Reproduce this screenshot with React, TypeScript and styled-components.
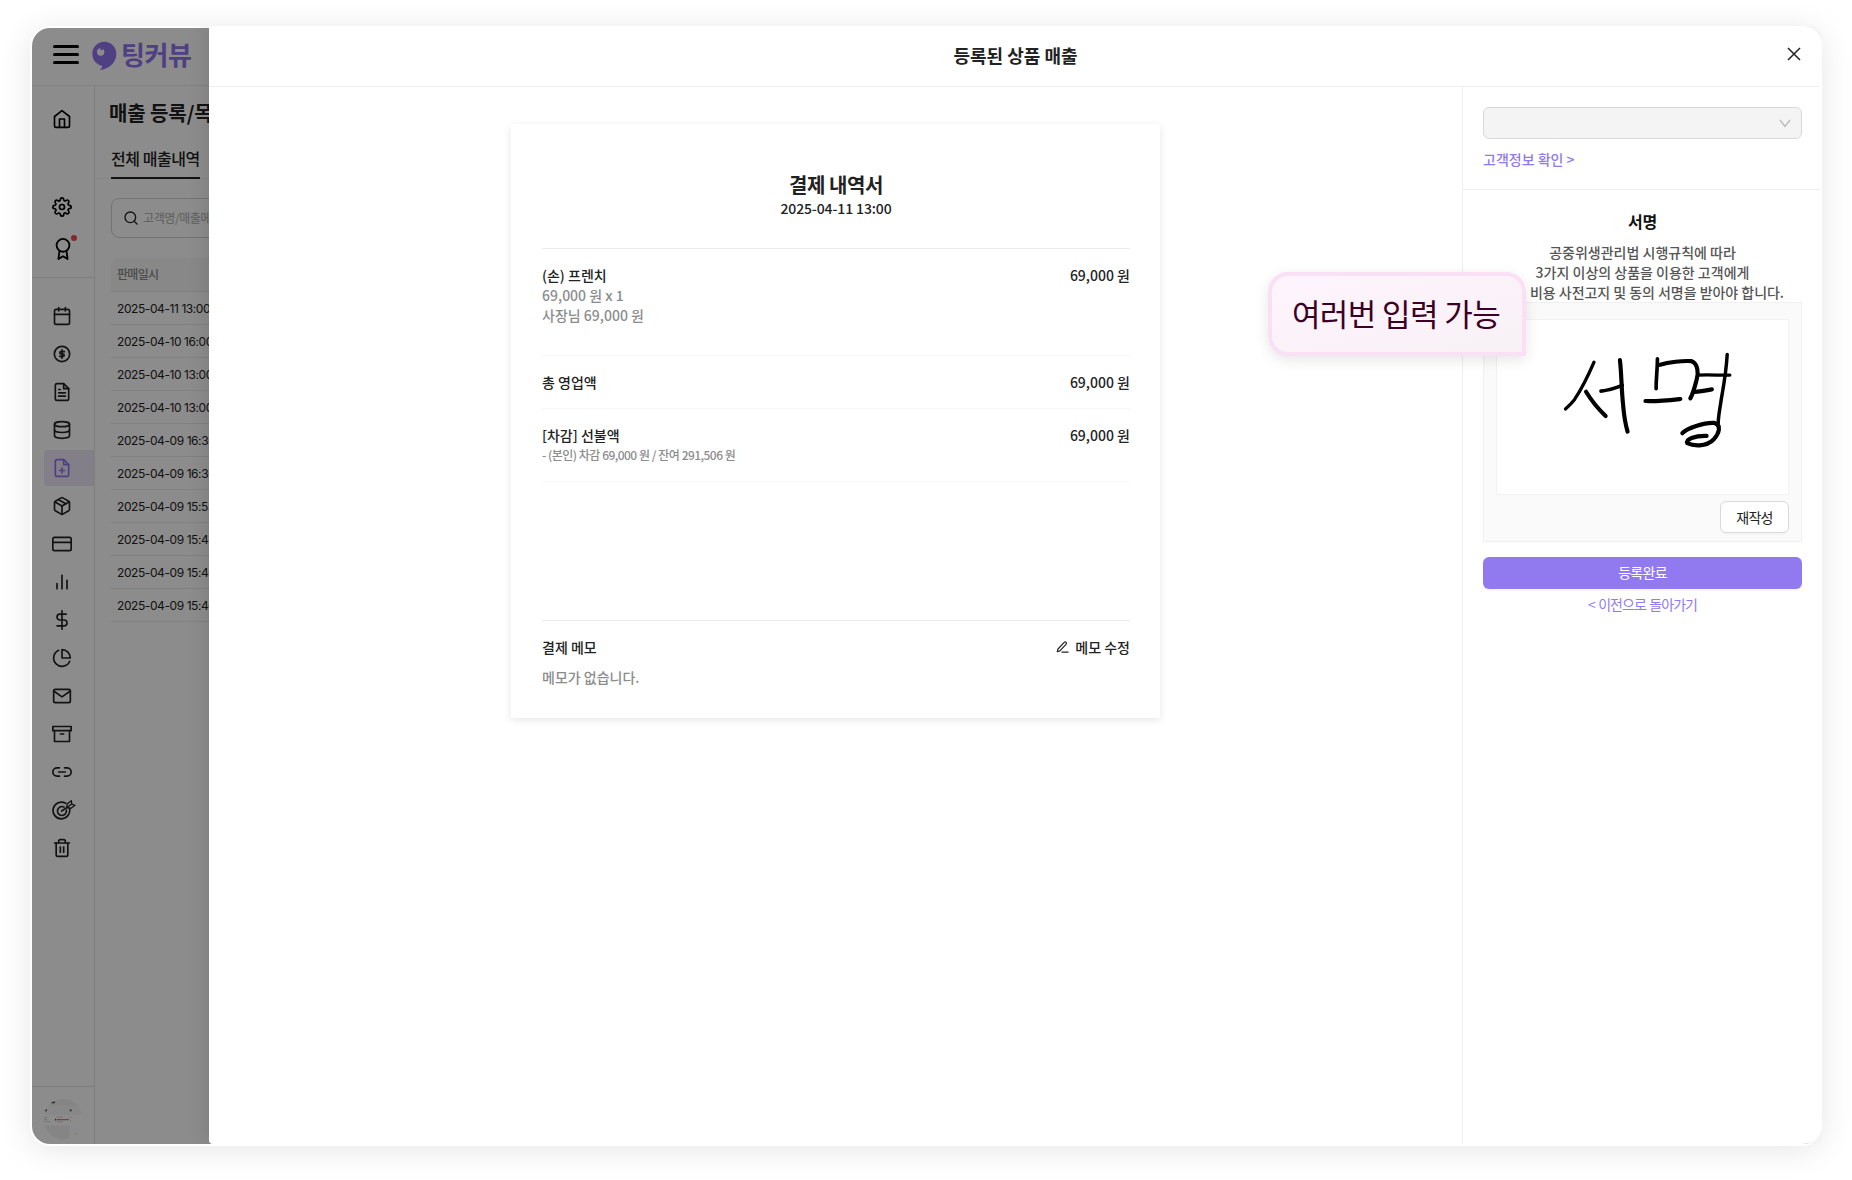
import { ReactNode } from "react";
import styled, { createGlobalStyle, css } from "styled-components";
import {
  FiArchive,
  FiAward,
  FiBarChart2,
  FiCalendar,
  FiCreditCard,
  FiDatabase,
  FiDollarSign,
  FiFilePlus,
  FiFileText,
  FiHome,
  FiLink2,
  FiMail,
  FiPackage,
  FiPieChart,
  FiSearch,
  FiSettings,
  FiTrash2,
} from "react-icons/fi";

interface MenuItem {
  name: string;
  icon: ReactNode;
  isActive?: boolean;
}

const CircleDollarIcon = () => (
  <svg width="20" height="20" viewBox="0 0 24 24" fill="none" stroke="currentColor" strokeWidth="2" strokeLinecap="round" strokeLinejoin="round">
    <circle cx="12" cy="12" r="9.2" />
    <path d="M14.8 9.2h-4a1.4 1.4 0 0 0 0 2.8h2.4a1.4 1.4 0 0 1 0 2.8h-4M12 7v10" />
  </svg>
);

const TargetIcon = () => (
  <svg width="24" height="22" viewBox="0 0 72 66" fill="none" stroke="currentColor" strokeWidth="5" strokeLinecap="round" strokeLinejoin="round">
    <path d="M41 13A25 25 0 1 0 52 27" />
    <path d="M36 24A13.5 13.5 0 1 0 43 33" />
    <path d="M29 36L44 26" />
    <path d="M44 26L46 14L58 5L59 15L69 19L57 28Z" strokeWidth="4" />
    <path d="M44 26L59 15" strokeWidth="4" />
  </svg>
);

const menuItems: MenuItem[] = [
  { name: "calendar", icon: <FiCalendar /> },
  { name: "price", icon: <CircleDollarIcon /> },
  { name: "document", icon: <FiFileText /> },
  { name: "database", icon: <FiDatabase /> },
  { name: "sales", icon: <FiFilePlus />, isActive: true },
  { name: "product", icon: <FiPackage /> },
  { name: "card", icon: <FiCreditCard /> },
  { name: "chart", icon: <FiBarChart2 /> },
  { name: "dollar", icon: <FiDollarSign /> },
  { name: "pie", icon: <FiPieChart /> },
  { name: "mail", icon: <FiMail /> },
  { name: "archive", icon: <FiArchive /> },
  { name: "link", icon: <FiLink2 /> },
  { name: "target", icon: <TargetIcon /> },
  { name: "trash", icon: <FiTrash2 /> },
];

const saleDates: string[] = [
  "2025-04-11 13:00",
  "2025-04-10 16:00",
  "2025-04-10 13:00",
  "2025-04-10 13:00",
  "2025-04-09 16:30",
  "2025-04-09 16:30",
  "2025-04-09 15:53",
  "2025-04-09 15:48",
  "2025-04-09 15:46",
  "2025-04-09 15:46",
];

const Logo = () => (
  <LogoContainer>
    <svg width="25" height="30" viewBox="0 0 75 90" fill="#9173ee">
      <path d="M37 2C57 2 73 18 73 38C73 64 52 84 23 87C29 82 31 78 30 74C13 71 1 56 1 38C1 18 17 2 37 2Z" />
      <circle cx="26" cy="33" r="11" fill="#fff" />
      <circle cx="29" cy="24" r="4" />
    </svg>
    <span>팅커뷰</span>
  </LogoContainer>
);

const Avatar = () => (
  <svg width="40" height="42" viewBox="0 0 120 126">
    <defs>
      <clipPath id="avatar-clip">
        <ellipse cx="60" cy="63" rx="59" ry="61" />
      </clipPath>
    </defs>
    <g clipPath="url(#avatar-clip)">
      <rect width="120" height="126" fill="#f3f3f3" />
      <rect y="24" width="120" height="26" fill="#f8f8f8" />
      <rect y="50" width="120" height="32" fill="#fff" />
      <rect x="80" y="50" width="40" height="76" fill="#fff" />
      <path d="M24 13h12M4 37h8M80 37h6M36 65h4" stroke="#555" strokeWidth="5" />
      <path d="M42 65h36" stroke="#d08878" strokeWidth="4" />
      <path d="M42 57h16M42 71h18M4 59h10M4 65h8M4 71h18M96 106h6" stroke="#bbb" strokeWidth="2" />
      <path d="M83 56v20" stroke="#cca" strokeWidth="3" strokeDasharray="4 8" />
    </g>
  </svg>
);

const Signature = () => (
  <svg width="292" height="174" viewBox="109 267 877 524" fill="none" stroke="#000" strokeWidth="12.5" strokeLinecap="round" strokeLinejoin="round">
    <path d="M403 397C388 432 368 474 344 510C336 520 326 530 317 538" strokeWidth="10" />
    <path d="M379 486C390 504 418 540 438 559" />
    <path d="M424 484C447 482 468 475 488 467" strokeWidth="11" />
    <path d="M481 391C486 430 485 475 491 530C494 565 498 585 504 606" />
    <path d="M594 387C594 420 590 440 590 477" strokeWidth="11" />
    <path d="M602 405C627 397 670 392 697 394C715 400 719 430 712 450C706 472 702 490 693 506" />
    <path d="M558 514C590 516 635 511 663 508" />
    <path d="M716 436C750 434 785 437 812 436" strokeWidth="10" />
    <path d="M705 487C722 485 740 482 758 479" />
    <path d="M804 374C801 430 792 475 786 510C781 545 777 560 777 582" strokeWidth="10.5" />
    <path d="M669 611C682 596 735 578 766 580C788 588 779 612 764 629C740 654 700 649 684 641C678 630 705 618 742 619" />
  </svg>
);

export default function App() {
  return (
    <>
      <GlobalStyle />
      <Frame>
        <Shell>
          <TopBar>
            <Hamburger>
              <span />
              <span />
              <span />
            </Hamburger>
            <Logo />
          </TopBar>
          <ShellBody>
            <SideBar>
              <TopMenu>
                <FiHome />
                <FiSettings />
                <AwardItem>
                  <FiAward />
                </AwardItem>
              </TopMenu>
              <Menu>
                {menuItems.map(({ name, icon, isActive }) => (
                  <MenuButton key={name} $isActive={isActive}>
                    {icon}
                  </MenuButton>
                ))}
              </Menu>
              <Profile>
                <Avatar />
              </Profile>
            </SideBar>
            <SalesPage>
              <h1>매출 등록/목록</h1>
              <Tabs>
                <span>전체 매출내역</span>
              </Tabs>
              <SearchBox>
                <FiSearch />
                고객명/매출메모
              </SearchBox>
              <Table>
                <TableHead>판매일시</TableHead>
                {saleDates.map((date, i) => (
                  <TableRow key={i}>{date}</TableRow>
                ))}
              </Table>
            </SalesPage>
          </ShellBody>
          <Mask />
        </Shell>

        <Drawer>
          <DrawerHeader>
            <h2>등록된 상품 매출</h2>
            <CloseButton>
              <svg width="14" height="14" viewBox="0 0 14 14" stroke="#222" strokeWidth="1.5">
                <path d="M1 1L13 13M13 1L1 13" />
              </svg>
            </CloseButton>
          </DrawerHeader>
          <DrawerBody>
            <ReceiptArea>
              <Receipt>
                <ReceiptHeader>
                  <h3>결제 내역서</h3>
                  <p>2025-04-11 13:00</p>
                </ReceiptHeader>
                <ReceiptRow $height={107}>
                  <div>
                    <p>(손) 프렌치</p>
                    <Muted>69,000 원 x 1</Muted>
                    <Muted>사장님 69,000 원</Muted>
                  </div>
                  <p>69,000 원</p>
                </ReceiptRow>
                <ReceiptRow $height={53}>
                  <p>총 영업액</p>
                  <p>69,000 원</p>
                </ReceiptRow>
                <ReceiptRow $height={73}>
                  <div>
                    <p>[차감] 선불액</p>
                    <Muted $isSmall>- (본인) 차감 69,000 원 / 잔여 291,506 원</Muted>
                  </div>
                  <p>69,000 원</p>
                </ReceiptRow>
                <Memo>
                  <MemoHeader>
                    <p>결제 메모</p>
                    <EditButton>
                      <svg width="13" height="13" viewBox="0 0 13 13" fill="none" stroke="#222" strokeWidth="1.2" strokeLinejoin="round">
                        <path d="M1.3 10.7L2 8L8.2 1.4Q9.2 .6 10 1.4T10 3.3L3.9 9.9ZM5.5 11.2H12.5" />
                      </svg>
                      메모 수정
                    </EditButton>
                  </MemoHeader>
                  <Muted>메모가 없습니다.</Muted>
                </Memo>
              </Receipt>
            </ReceiptArea>

            <SidePanel>
              <Customer>
                <Select>
                  <svg width="12" height="9" viewBox="0 0 12 9" fill="none" stroke="#b8b8b8" strokeWidth="1.3">
                    <path d="M1 1L6 7.5L11 1" />
                  </svg>
                </Select>
                <a>고객정보 확인 &gt;</a>
              </Customer>
              <SignSection>
                <h4>서명</h4>
                <p>공중위생관리법 시행규칙에 따라</p>
                <p>3가지 이상의 상품을 이용한 고객에게</p>
                <LastLine>비용 사전고지 및 동의 서명을 받아야 합니다.</LastLine>
                <SignBox>
                  <SignCanvas>
                    <Signature />
                  </SignCanvas>
                  <RewriteButton>재작성</RewriteButton>
                </SignBox>
                <SubmitButton>등록완료</SubmitButton>
                <BackLink>&lt; 이전으로 돌아가기</BackLink>
              </SignSection>
            </SidePanel>
          </DrawerBody>
        </Drawer>
        <Callout>여러번 입력 가능</Callout>
      </Frame>
    </>
  );
}

const GlobalStyle = createGlobalStyle`
  * {
    box-sizing: border-box;
  }

  body {
    margin: 0;
    background: #fff;
    color: #222;
    font-family: "Noto Sans CJK KR", sans-serif;
    font-size: 14px;
    font-weight: 500;
    line-height: 20px;
  }

  h1, h2, h3, h4, p {
    margin: 0;
  }

  button {
    font-family: inherit;
    padding: 0;
  }

  svg {
    display: block;
    flex-shrink: 0;
  }
`;

const Frame = styled.div`
  position: relative;
  width: 1792px;
  height: 1120px;
  margin: 26px 30px 34px;
  padding: 2px;
  border-radius: 20px;
  background: #fff;
  box-shadow: 0 4px 32px rgba(0, 0, 0, 0.1);
`;

const Shell = styled.div`
  position: relative;
  display: flex;
  flex-direction: column;
  height: 1116px;
  border-radius: 18px;
  overflow: hidden;
  background: #fff;
`;

const Mask = styled.div`
  position: absolute;
  inset: 0;
  background: rgba(0, 0, 0, 0.45);
`;

const TopBar = styled.header`
  display: flex;
  align-items: center;
  height: 58px;
  padding-left: 21px;
  border-bottom: 1px solid #ededed;
`;

const Hamburger = styled.div`
  display: flex;
  flex-direction: column;
  gap: 5px;
  width: 26px;
  margin-right: 13px;
  margin-top: -4px;

  span {
    height: 3px;
    border-radius: 2px;
    background: #000;
  }
`;

const LogoContainer = styled.div`
  display: flex;
  align-items: center;
  gap: 4px;
  margin-top: -2px;

  span {
    color: #9173ee;
    font-size: 26px;
    font-weight: 700;
    letter-spacing: -0.4px;
    line-height: 30px;
    margin-top: -3px;
  }
`;

const ShellBody = styled.div`
  display: flex;
  flex: 1;
`;

const SideBar = styled.nav`
  display: flex;
  flex-direction: column;
  width: 63px;
  border-right: 1px solid #e6e6e6;

  svg {
    font-size: 20px;
  }
`;

const TopMenu = styled.div`
  display: flex;
  flex-direction: column;
  align-items: center;
  height: 192px;
  padding-top: 23px;
  padding-right: 2px;
  border-bottom: 1px solid #e6e6e6;
  color: #000;

  > svg:nth-child(2) {
    margin-top: 68px;
  }
`;

const AwardItem = styled.div`
  position: relative;
  margin: 21px 0 0 2px;

  svg {
    font-size: 22px;
  }

  &::after {
    content: "";
    position: absolute;
    top: -3px;
    right: -3px;
    width: 6px;
    height: 6px;
    border-radius: 50%;
    background: #f5484b;
  }
`;

const Menu = styled.div`
  display: flex;
  flex-direction: column;
  gap: 2px;
  padding-top: 20px;
`;

const MenuButton = styled.div<{ $isActive?: boolean }>`
  display: flex;
  align-items: center;
  height: 36px;
  margin-left: 12px;
  padding-left: 8px;
  border-radius: 4px 0 0 4px;

  ${({ $isActive }) =>
    $isActive &&
    css`
      color: #9173ee;
      background: #ede7fa;
    `}
`;

const Profile = styled.div`
  margin-top: auto;
  height: 58px;
  padding: 11px 0 0 11px;
  border-top: 1px solid #e6e6e6;
`;

const SalesPage = styled.main`
  flex: 1;
  padding: 17px 0 0 14px;

  h1 {
    font-size: 20px;
    line-height: 20px;
    letter-spacing: -0.1px;
  }
`;

const Tabs = styled.div`
  height: 56px;
  margin-left: -13px;
  padding: 20px 0 0 15px;
  border-bottom: 1px solid #f0f0f0;

  span {
    display: inline-block;
    height: 36px;
    padding-top: 5px;
    border-bottom: 2px solid #222;
    font-size: 16px;
    letter-spacing: -0.45px;
  }
`;

const SearchBox = styled.div`
  display: flex;
  align-items: center;
  gap: 4px;
  width: 400px;
  height: 40px;
  margin: 19px 0 20px 2px;
  padding-left: 11px;
  border: 1px solid #d2d2d2;
  border-radius: 8px;
  color: #aaa;
  font-size: 12px;
  font-weight: 400;
  letter-spacing: -0.4px;

  svg {
    color: #222;
    font-size: 16px;
  }
`;

const Table = styled.div`
  margin-left: 2px;
`;

const TableHead = styled.div`
  height: 34px;
  padding: 6px;
  border-radius: 8px 0 0 0;
  border-bottom: 1px solid #ececec;
  background: #f8f8f8;
  color: #888;
  font-size: 12px;
  letter-spacing: -0.7px;
`;

const TableRow = styled.div`
  height: 33px;
  padding: 7px 6px 5px;
  border-bottom: 1px solid #ececec;
  font-family: Inter, sans-serif;
  font-size: 12px;
  font-weight: 400;
  letter-spacing: -0.42px;
  white-space: nowrap;
`;

const Drawer = styled.section`
  position: absolute;
  top: 0;
  left: 179px;
  display: flex;
  flex-direction: column;
  width: 1613px;
  height: 1118px;
  border-radius: 0 20px 20px 4px;
  background: #fff;
  box-shadow: -6px 0 16px rgba(0, 0, 0, 0.08);
  clip-path: inset(0 0 0 -40px);
`;

const DrawerHeader = styled.header`
  display: flex;
  align-items: center;
  height: 61px;
  padding-right: 19px;
  margin-right: 2px;
  border-bottom: 1px solid #efefef;

  h2 {
    flex: 1;
    margin-top: -2px;
    padding-left: 35px;
    font-size: 18px;
    text-align: center;
  }
`;

const CloseButton = styled.button`
  border: none;
  background: none;
  margin-bottom: 5px;
`;

const DrawerBody = styled.div`
  display: flex;
  flex: 1;
  margin-right: 2px;
`;

const ReceiptArea = styled.div`
  flex: 1;
  padding: 37px 0 0 302px;
`;

const Receipt = styled.article`
  width: 649px;
  height: 594px;
  padding: 46px 30px 0 31px;
  box-shadow: 0 2px 8px rgba(0, 0, 0, 0.1);
`;

const ReceiptHeader = styled.div`
  height: 79px;
  border-bottom: 1px solid #ebebeb;
  text-align: center;
  letter-spacing: -0.12px;

  h3 {
    padding-top: 1px;
    font-size: 20px;
    line-height: 27px;
    letter-spacing: -0.4px;
  }
`;

const ReceiptRow = styled.div<{ $height: number }>`
  display: flex;
  justify-content: space-between;
  height: ${({ $height }) => $height}px;
  padding-top: 16px;
  border-bottom: 1px solid #f7f7f7;
`;

const Muted = styled.p<{ $isSmall?: boolean }>`
  color: #8c8c8c;

  ${({ $isSmall }) =>
    $isSmall &&
    css`
      font-size: 12px;
      letter-spacing: -0.55px;
      word-spacing: 0.2px;
    `}
`;

const Memo = styled.div`
  margin-top: 138px;
  padding-top: 16px;
  border-top: 1px solid #ebebeb;
`;

const MemoHeader = styled.div`
  display: flex;
  justify-content: space-between;
  margin-bottom: 10px;
`;

const EditButton = styled.div`
  display: flex;
  align-items: center;
  gap: 6px;
`;

const SidePanel = styled.aside`
  width: 358px;
  border-left: 1px solid #efefef;
`;

const Customer = styled.div`
  height: 103px;
  padding: 20px 18px 0 20px;
  border-bottom: 1px solid #efefef;

  a {
    display: block;
    margin-top: 10px;
    color: #9179ee;
  }
`;

const Select = styled.div`
  display: flex;
  align-items: center;
  justify-content: flex-end;
  height: 32px;
  padding-right: 10px;
  border: 1px solid #d9d9d9;
  border-radius: 6px;
  background: #f4f4f4;
`;

const SignSection = styled.div`
  padding: 21px 18px 0 20px;
  text-align: center;
  color: #555;

  h4 {
    margin-bottom: 11px;
    color: #111;
    font-size: 16px;
    letter-spacing: -0.3px;
  }
`;

// the start of this line sits under the callout
const LastLine = styled.p`
  padding-left: 29px;
  letter-spacing: -0.04px;
  white-space: nowrap;
`;

const SignBox = styled.div`
  display: flex;
  flex-direction: column;
  align-items: flex-end;
  height: 240px;
  margin-bottom: 15px;
  padding: 16px 12px 0;
  border: 1px solid #f0f0f0;
  background: #fafafa;
`;

const SignCanvas = styled.div`
  width: 293px;
  height: 176px;
  border: 1px solid #f2f2f2;
  background: #fff;

  svg {
    margin: -1px 0 0 -1px;
  }
`;

const RewriteButton = styled.button`
  width: 69px;
  height: 32px;
  margin-top: 6px;
  padding-bottom: 1px;
  border: 1px solid #d9d9d9;
  border-radius: 6px;
  background: #fff;
  box-shadow: 0 2px 0 rgba(0, 0, 0, 0.02);
  color: #222;
  font-size: 14px;
  font-weight: 400;
  letter-spacing: -0.7px;
`;

const SubmitButton = styled.button`
  width: 100%;
  height: 32px;
  padding-bottom: 2px;
  border: none;
  border-radius: 6px;
  background: #917aef;
  box-shadow: 0 2px 0 rgba(145, 122, 239, 0.08);
  color: #fff;
  font-size: 14px;
  font-weight: 400;
  letter-spacing: -0.7px;
`;

const BackLink = styled.p`
  margin-top: 5px;
  color: #917aef;
  font-weight: 400;
  letter-spacing: -0.95px;
  word-spacing: 1.2px;
`;

const Callout = styled.div`
  position: absolute;
  top: 246px;
  left: 1238px;
  display: flex;
  align-items: center;
  justify-content: center;
  width: 258px;
  height: 84px;
  padding: 0 2px 2px 0;
  border: 4px solid #fadff5;
  border-radius: 20px 20px 0 20px;
  background: linear-gradient(165deg, #fef4fd, #f7f1f5);
  box-shadow: 0 4px 14px rgba(0, 0, 0, 0.1);
  color: #3b0024;
  font-size: 31px;
  font-weight: 400;
  letter-spacing: -0.6px;
  white-space: nowrap;
`;
